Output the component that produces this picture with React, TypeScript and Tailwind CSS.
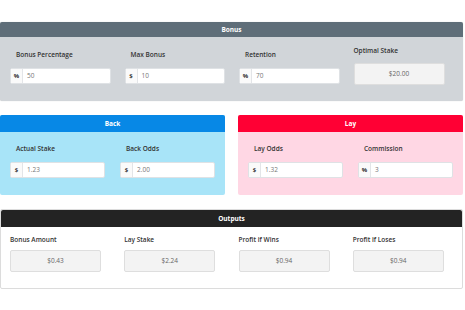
import React from "react";

interface FieldProps {
    label: string;
    addon: string;
    value: string;
}

const InputField: React.FC<FieldProps> = ({ label, addon, value }) => (
    <div className="flex flex-col">
        <label className="pl-[6px] mb-[9px] text-[6.5px] leading-[9px] font-semibold text-[#333]">{label}</label>
        <div className="flex h-[16px] bg-white border border-[#dfe2e5] rounded-[2px]">
            <span className="w-[12px] flex items-center justify-center text-[6px] font-bold text-[#333] border-r border-[#e3e5e8] bg-[#fafafa]">
                {addon}
            </span>
            <span className="pl-[4px] flex items-center text-[6.5px] text-[#777]">{value}</span>
        </div>
    </div>
);

const OutputBox: React.FC<{ label: string; value: string; gap?: string }> = ({ label, value, gap = "mb-[8px]" }) => (
    <div className="flex flex-col">
        <label className={`${gap} text-[6.5px] leading-[9px] font-semibold text-[#333]`}>{label}</label>
        <div className="w-[91px] h-[22px] flex items-center justify-center bg-[#f3f3f3] border border-[#dedede] rounded-[2px] text-[6.5px] text-[#666]">
            {value}
        </div>
    </div>
);

const PanelHeader: React.FC<{ title: string; className: string }> = ({ title, className }) => (
    <div className={`flex items-center justify-center text-[6.5px] font-bold text-white rounded-t-[2px] ${className}`}>
        {title}
    </div>
);

export default function App() {
    return (
        <div className="w-[465px] h-[310px] bg-white pt-[22px] font-['Open_Sans',sans-serif]">
            <div className="w-[463px] flex flex-col gap-[14px]">
                {/* Bonus */}
                <div className="rounded-[2px] bg-[#d1d5d9] shadow-[0_0_1px_rgba(0,0,0,0.2)]">
                    <PanelHeader title="Bonus" className="h-[15px] bg-[#5f6e79]" />
                    <div className="grid grid-cols-4 gap-x-[14px] items-end pl-[10px] pr-[9px] pt-[9px] pb-[16px]">
                        <div className="mb-[1px]">
                            <InputField label="Bonus Percentage" addon="%" value="50" />
                        </div>
                        <div className="mb-[1px]">
                            <InputField label="Max Bonus" addon="$" value="10" />
                        </div>
                        <div className="mb-[1px]">
                            <InputField label="Retention" addon="%" value="70" />
                        </div>
                        <OutputBox label="Optimal Stake" value="$20.00" />
                    </div>
                </div>

                {/* Back / Lay */}
                <div className="flex gap-[13px]">
                    <div className="w-[225px] rounded-[2px] bg-[#a8e4f8]">
                        <PanelHeader title="Back" className="h-[17px] bg-[#0788e6]" />
                        <div className="grid grid-cols-2 gap-x-[15px] px-[10px] pt-[12px] pb-[17px]">
                            <InputField label="Actual Stake" addon="$" value="1.23" />
                            <InputField label="Back Odds" addon="$" value="2.00" />
                        </div>
                    </div>
                    <div className="w-[225px] rounded-[2px] bg-[#ffd7e4]">
                        <PanelHeader title="Lay" className="h-[17px] bg-[#ff0034]" />
                        <div className="grid grid-cols-2 gap-x-[15px] px-[10px] pt-[12px] pb-[17px]">
                            <InputField label="Lay Odds" addon="$" value="1.32" />
                            <InputField label="Commission" addon="%" value="3" />
                        </div>
                    </div>
                </div>

                {/* Outputs */}
                <div className="rounded-[2px] bg-white border border-[#dcdcdc]">
                    <PanelHeader title="Outputs" className="h-[17px] bg-[#232323]" />
                    <div className="grid grid-cols-4 gap-x-[14px] pl-[9px] pr-[9px] pt-[8px] pb-[16px]">
                        <OutputBox label="Bonus Amount" value="$0.43" gap="mb-[6px]" />
                        <OutputBox label="Lay Stake" value="$2.24" gap="mb-[6px]" />
                        <OutputBox label="Profit if Wins" value="$0.94" gap="mb-[6px]" />
                        <OutputBox label="Profit if Loses" value="$0.94" gap="mb-[6px]" />
                    </div>
                </div>
            </div>
        </div>
    );
}
